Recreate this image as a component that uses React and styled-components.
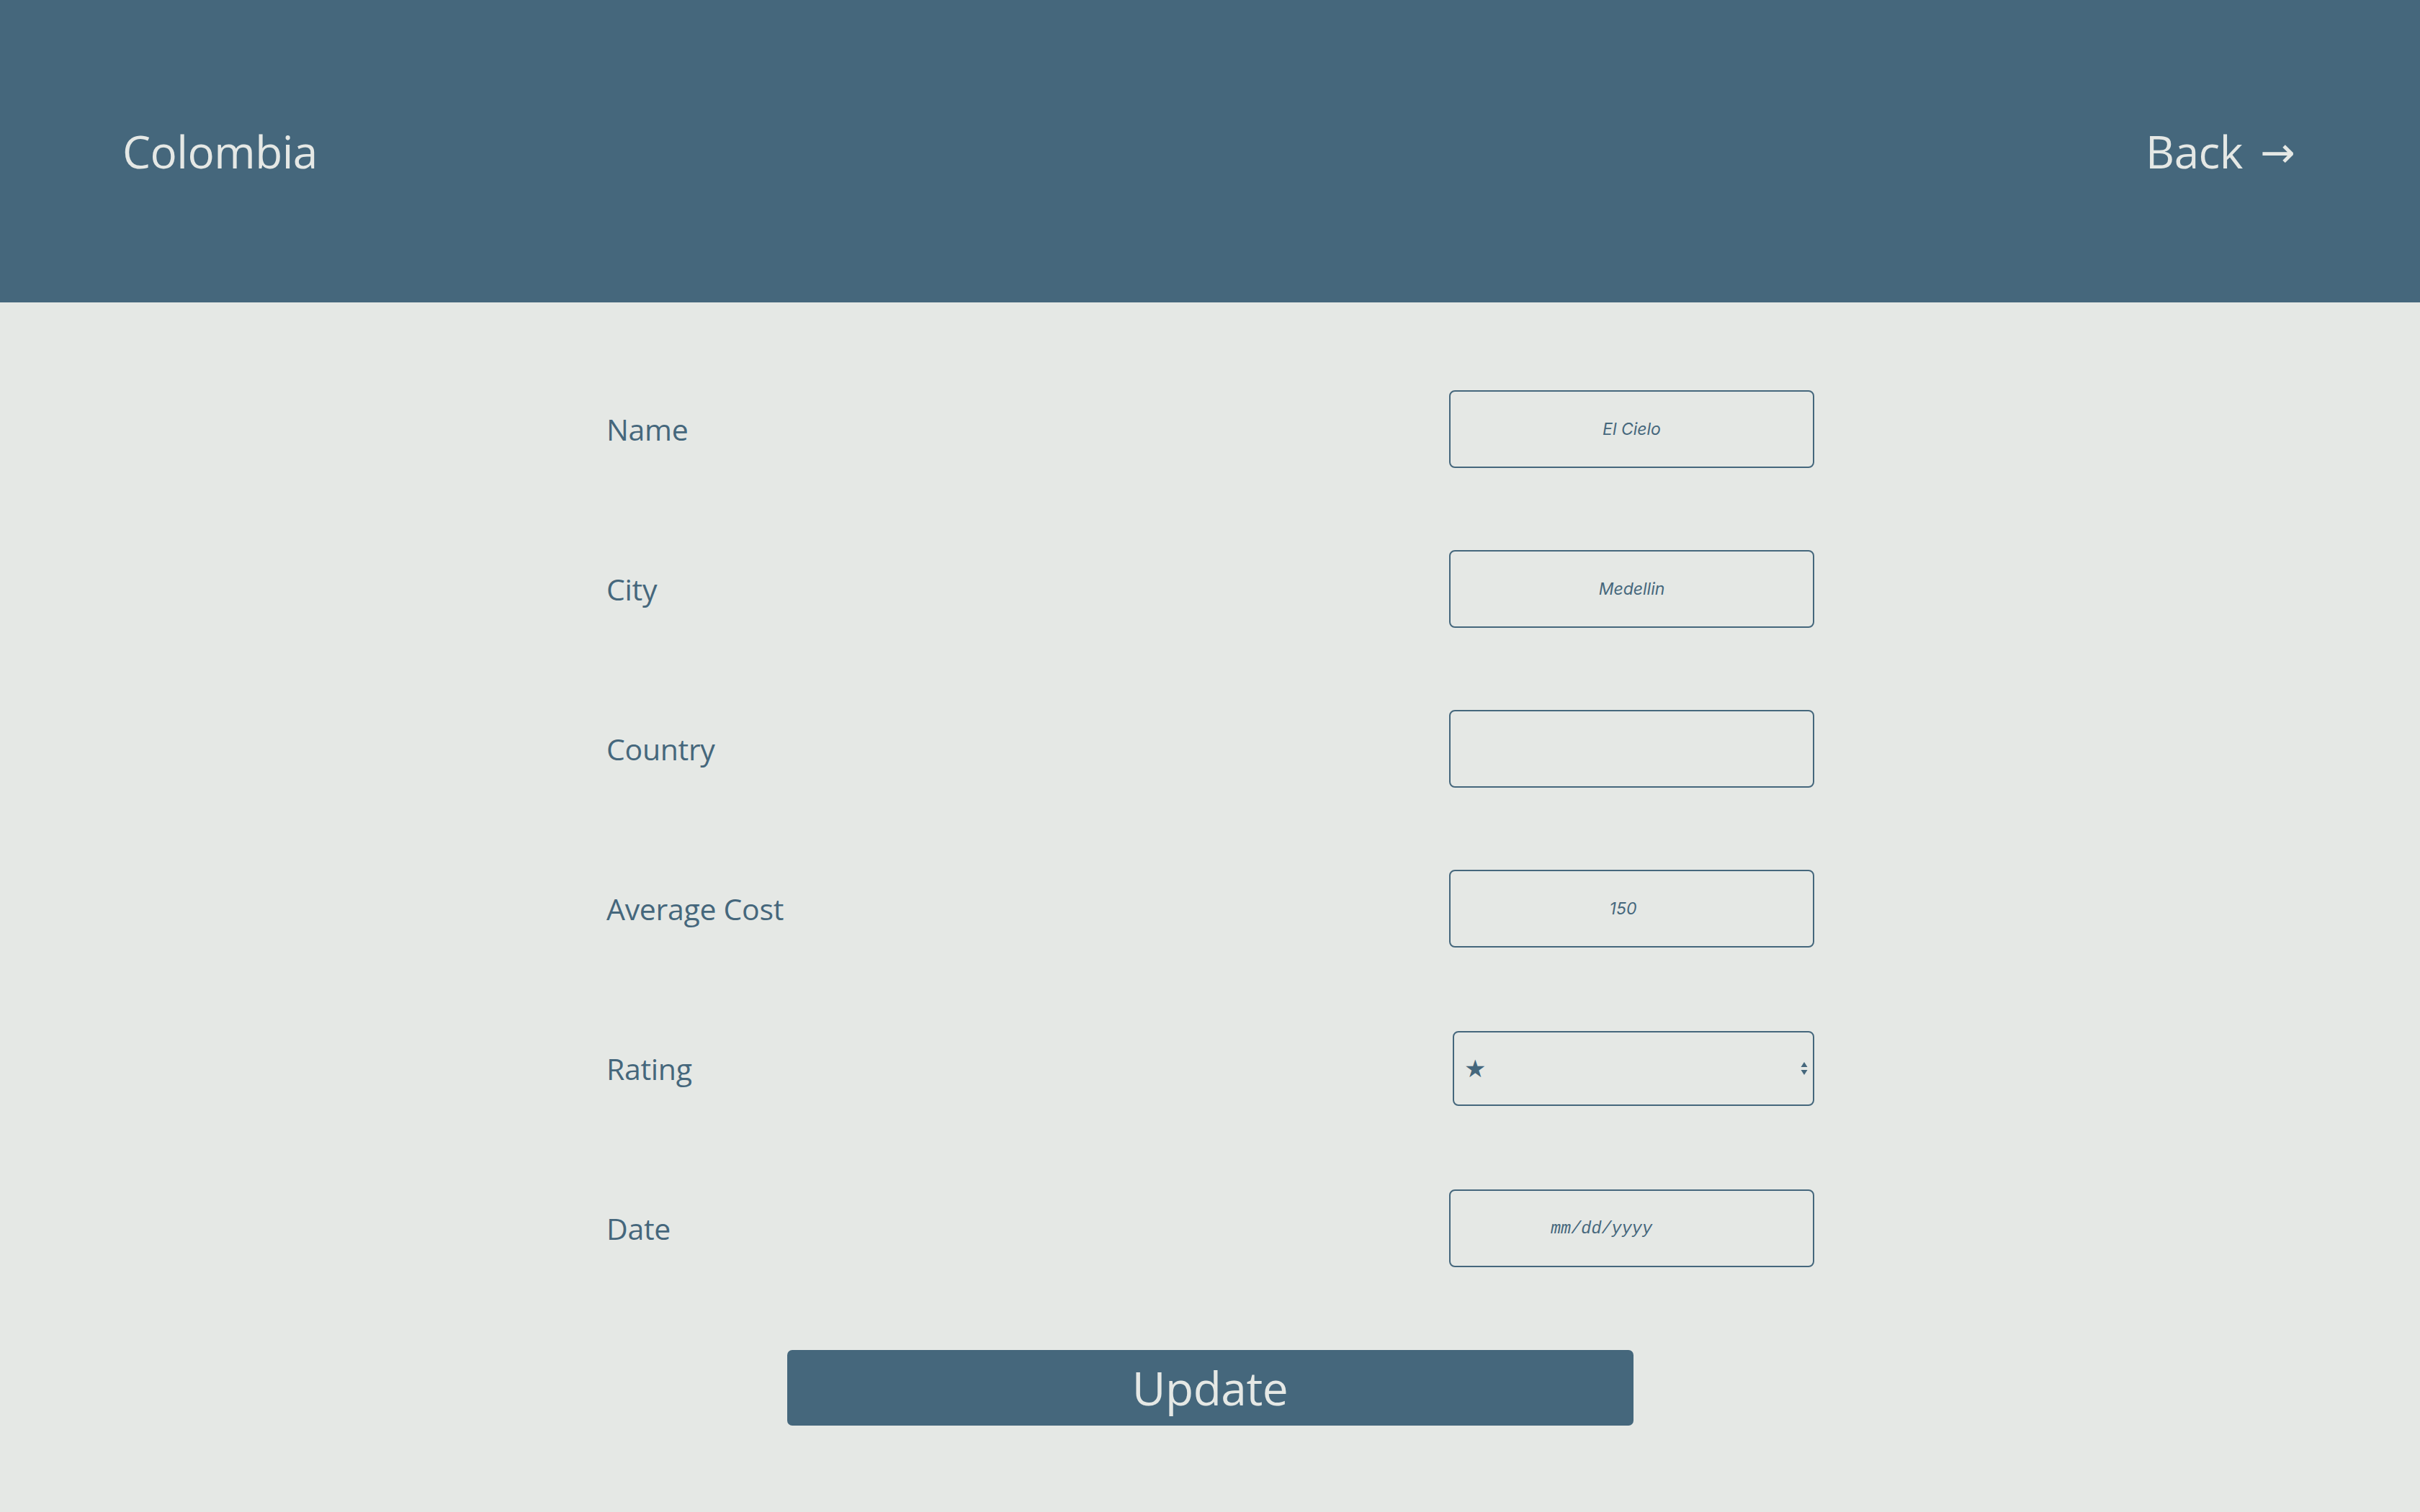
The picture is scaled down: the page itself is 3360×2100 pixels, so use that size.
import React from "react";
import styled, { createGlobalStyle } from "styled-components";

const BLUE = "#45677c";
const LIGHT = "#e5e8e5";

const GlobalStyle = createGlobalStyle`
  html, body { margin: 0; padding: 0; background: ${LIGHT}; }
  body { font-family: "Open Sans", "Noto Sans", sans-serif; }
  * { box-sizing: border-box; }
`;

const Page = styled.div`
  min-height: 2100px;
  background: ${LIGHT};
`;

const Header = styled.header`
  height: 420px;
  background: ${BLUE};
  display: flex;
  align-items: center;
  justify-content: space-between;
  padding: 0 174px 0 170px;
`;

const Title = styled.h1`
  margin: 0;
  font-size: 62px;
  font-weight: 400;
  color: ${LIGHT};
  letter-spacing: -0.5px;
`;

const BackLink = styled.a`
  display: flex;
  align-items: center;
  gap: 24px;
  font-size: 62px;
  color: ${LIGHT};
  text-decoration: none;
  letter-spacing: -0.5px;
`;

const Arrow = styled.span`
  font-family: "DejaVu Sans", sans-serif;
  font-size: 58px;
  line-height: 1;
  position: relative;
  top: 2px;
`;

const Form = styled.form`
  width: 1680px;
  margin: 0 auto;
  padding-top: 122px;
  display: flex;
  flex-direction: column;
  gap: 114px;
`;

const Row = styled.div`
  display: flex;
  align-items: center;
  justify-content: space-between;
  height: 108px;
  padding: 0 1px 0 2px;
`;

const Label = styled.label`
  font-size: 41px;
  color: ${BLUE};
  letter-spacing: -0.3px;
`;

const Input = styled.input`
  width: 507px;
  height: 108px;
  border: 2px solid ${BLUE};
  border-radius: 8px;
  background: transparent;
  color: ${BLUE};
  font-family: Inter, "Liberation Sans", sans-serif;
  font-style: italic;
  font-size: 23px;
  text-align: center;
  padding: 0 ${(p) => p.$padRight || 0}px 0 0;
  outline: none;
  &::placeholder { color: ${BLUE}; }
  &::-webkit-inner-spin-button,
  &::-webkit-outer-spin-button { -webkit-appearance: none; margin: 0; }
`;

const DateInput = styled(Input)`
  font-family: "Liberation Mono", monospace;
  font-size: 23.5px;
  text-align: left;
  padding-left: 139px;
`;

const SelectWrap = styled.div`
  position: relative;
  width: 502px;
  height: 104px;
`;

const Select = styled.select`
  appearance: none;
  -webkit-appearance: none;
  width: 100%;
  height: 100%;
  border: 2px solid ${BLUE};
  border-radius: 8px;
  background: transparent;
  color: ${BLUE};
  font-family: "DejaVu Sans", sans-serif;
  font-size: 34px;
  padding: 0 0 0 14px;
  outline: none;
`;

const SelectArrows = styled.svg`
  position: absolute;
  right: 9px;
  top: 50%;
  transform: translateY(-50%);
  pointer-events: none;
`;

const Button = styled.button`
  display: block;
  width: 1175px;
  height: 105px;
  margin: 1px auto 0;
  border: none;
  border-radius: 7px;
  background: ${BLUE};
  color: ${LIGHT};
  font-family: "Open Sans", "Noto Sans", sans-serif;
  font-size: 64px;
  line-height: 1;
  letter-spacing: -0.5px;
  cursor: pointer;
`;

export default function App() {
  return (
    <Page>
      <GlobalStyle />
      <Header>
        <Title>Colombia</Title>
        <BackLink href="#">
          Back <Arrow>→</Arrow>
        </BackLink>
      </Header>
      <Form onSubmit={(e) => e.preventDefault()}>
        <Row>
          <Label>Name</Label>
          <Input type="text" defaultValue="El Cielo" />
        </Row>
        <Row>
          <Label>City</Label>
          <Input type="text" defaultValue="Medellin" />
        </Row>
        <Row>
          <Label>Country</Label>
          <Input type="text" defaultValue="" />
        </Row>
        <Row>
          <Label>Average Cost</Label>
          <Input type="number" defaultValue="150" $padRight={24} />
        </Row>
        <Row>
          <Label>Rating</Label>
          <SelectWrap>
            <Select defaultValue="1">
              <option value="1">★</option>
              <option value="2">★★</option>
              <option value="3">★★★</option>
              <option value="4">★★★★</option>
              <option value="5">★★★★★</option>
            </Select>
            <SelectArrows width="10" height="20" viewBox="0 0 10 20">
              <path d="M5 1 L9.5 8 L0.5 8 Z" fill={BLUE} />
              <path d="M0.5 12 L9.5 12 L5 19 Z" fill={BLUE} />
            </SelectArrows>
          </SelectWrap>
        </Row>
        <Row>
          <Label>Date</Label>
          <DateInput type="text" placeholder="mm/dd/yyyy" />
        </Row>
        <Button type="submit">Update</Button>
      </Form>
    </Page>
  );
}
